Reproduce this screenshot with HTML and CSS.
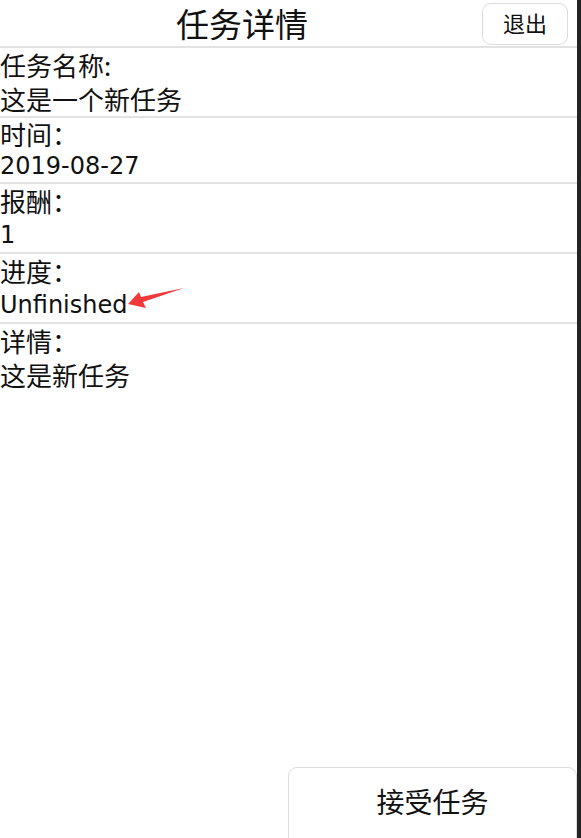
FILE: index.html
```html
<!DOCTYPE html>
<html lang="zh">
<head>
<meta charset="utf-8">
<title>任务详情</title>
<link rel="stylesheet" href="styles.css">
</head>
<body>
<div class="app">
  <header class="header">
    <h1 class="title">任务详情</h1>
    <button class="exit-btn">退出</button>
  </header>
  <section class="row">
    <div class="label">任务名称:</div>
    <div class="value cjk">这是一个新任务</div>
  </section>
  <section class="row row-compact">
    <div class="label">时间：</div>
    <div class="value">2019-08-27</div>
  </section>
  <section class="row">
    <div class="label">报酬：</div>
    <div class="value">1</div>
  </section>
  <section class="row">
    <div class="label">进度：</div>
    <div class="value">Unfinished</div>
  </section>
  <section class="row row-last">
    <div class="label">详情：</div>
    <div class="value cjk">这是新任务</div>
  </section>
  <button class="accept-btn">接受任务</button>
  <svg class="arrow" width="581" height="838" viewBox="0 0 581 838">
    <polygon points="128,304 139,292 141,297 184,288 143,302 146,308" fill="#f2383a"/>
  </svg>
</div>
</body>
</html>
```
FILE: styles.css
```css
html, body {
  margin: 0;
  padding: 0;
  background: #232323;
}
body {
  width: 581px;
  height: 838px;
  overflow: hidden;
}
.app {
  position: relative;
  width: 577px;
  height: 838px;
  background: #ffffff;
  display: flex;
  flex-direction: column;
  overflow: hidden;
  font-family: "DejaVu Sans", "Noto Sans CJK SC", sans-serif;
  color: #111;
}
.header {
  height: 46px;
  display: flex;
  align-items: center;
  border-bottom: 2px solid #e2e2e2;
  padding-right: 9px;
}
.title {
  flex: 1;
  margin: 0;
  padding-left: 2px;
  text-align: center;
  font-family: "Noto Sans CJK SC", sans-serif;
  font-weight: 400;
  font-size: 33px;
  line-height: 46px;
  color: #111;
}
.exit-btn {
  width: 86px;
  height: 42px;
  margin-top: 1px;
  background: #fff;
  border: 1px solid #dcdcdc;
  border-radius: 9px;
  font-family: "Noto Sans CJK SC", sans-serif;
  font-size: 22px;
  color: #111;
  padding: 0 0 4px 0;
}
.row {
  border-bottom: 2px solid #e2e2e2;
  font-size: 24px;
  line-height: 34px;
}
.row-compact {
  line-height: 32px;
}
.row-last {
  border-bottom: none;
}
.label, .value {
  white-space: nowrap;
}
.label, .cjk {
  font-family: "Noto Sans CJK SC", sans-serif;
  font-size: 26px;
}
.accept-btn {
  margin-top: auto;
  margin-bottom: -10px;
  align-self: flex-end;
  width: 289px;
  height: 81px;
  padding: 0 0 13px 0;
  background: #fff;
  border: 1px solid #dcdcdc;
  border-radius: 9px;
  font-family: "Noto Sans CJK SC", sans-serif;
  font-size: 28px;
  color: #111;
}
.arrow {
  position: absolute;
  left: 0;
  top: 0;
  pointer-events: none;
}
```
